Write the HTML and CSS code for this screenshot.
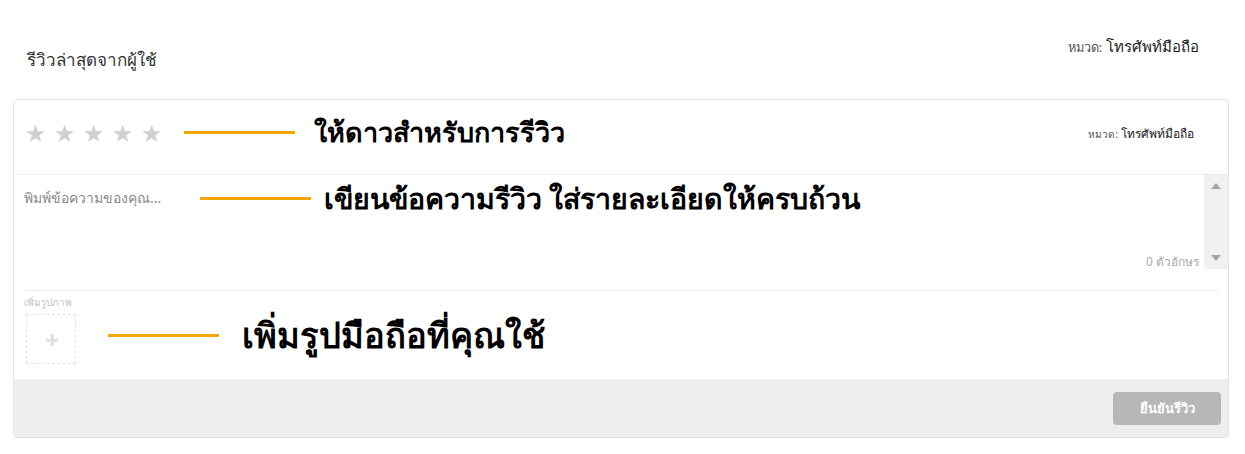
FILE: index.html
```html
<!DOCTYPE html>
<html lang="th">
<head>
<meta charset="utf-8">
<link rel="stylesheet" href="styles.css">
</head>
<body>
<div class="page">
  <header class="head">
    <h2 class="title">รีวิวล่าสุดจากผู้ใช้</h2>
    <div class="cat cat-top"><span class="cat-label">หมวด:</span> <span class="cat-val">โทรศัพท์มือถือ</span></div>
  </header>
  <section class="card">
    <div class="row-stars">
      <div class="stars">
        <span class="star">★</span><span class="star">★</span><span class="star">★</span><span class="star">★</span><span class="star">★</span>
      </div>
      <span class="line l1"></span>
      <span class="note n1">ให้ดาวสำหรับการรีวิว</span>
      <div class="cat cat-in"><span class="cat-label">หมวด:</span> <span class="cat-val">โทรศัพท์มือถือ</span></div>
    </div>
    <div class="row-text">
      <div class="text-main">
        <div class="text-top">
          <span class="placeholder">พิมพ์ข้อความของคุณ...</span>
          <span class="line l2"></span>
          <span class="note n2">เขียนข้อความรีวิว ใส่รายละเอียดให้ครบถ้วน</span>
        </div>
        <div class="count">0 ตัวอักษร</div>
      </div>
      <div class="scroll">
        <span class="arr up"></span>
        <span class="arr down"></span>
      </div>
    </div>
    <div class="row-photo">
      <div class="photo-col">
        <div class="photo-label">เพิ่มรูปภาพ</div>
        <div class="photo-box"><span class="plus"></span></div>
      </div>
      <span class="line l3"></span>
      <span class="note n3">เพิ่มรูปมือถือที่คุณใช้</span>
    </div>
    <footer class="foot">
      <button class="submit">ยืนยันรีวิว</button>
    </footer>
  </section>
</div>
</body>
</html>
```
FILE: styles.css
```css
* { box-sizing: border-box; }
html, body { margin: 0; padding: 0; background: #fff; }
body { font-family: "Noto Sans", "DejaVu Sans", sans-serif; color: #333; }
.page { width: 1245px; height: 454px; padding: 0 16px 0 13px; }
.head { display: flex; justify-content: space-between; align-items: flex-start; height: 99px; }
.title { margin: 46px 0 0 14px; font-size: 17px; font-weight: 400; color: #333; }
.cat { white-space: nowrap; }
.cat-top { margin: 35px 30px 0 0; font-size: 15px; }
.cat-label { color: #555; font-size: 0.85em; }
.cat-val { color: #222; }
.card { border: 1px solid #e3e3e3; border-radius: 4px; height: 339px; display: flex; flex-direction: column; overflow: hidden; }
.row-stars { display: flex; align-items: center; height: 75px; padding: 0 34px 9px 10px; border-bottom: 1px solid #ececec; }
.stars { display: flex; gap: 6px; }
.star { color: #d0d0d0; font-size: 24px; line-height: 1; width: 23px; text-align: center; }
.line { display: block; height: 3px; background: #f5a500; width: 111px; flex: none; }
.l1 { margin-left: 21px; }
.note { font-weight: 700; color: #000; font-size: 27px; white-space: nowrap; line-height: 1.2; }
.n1 { margin-left: 19px; }
.cat-in { margin-left: auto; font-size: 12px; margin-top: 2px; }
.row-text { display: flex; height: 115px; }
.text-main { flex: 1; display: flex; flex-direction: column; padding: 6px 5px 19px 10px; }
.text-top { display: flex; align-items: center; }
.placeholder { color: #888; font-size: 14px; width: 147px; white-space: nowrap; }
.l2 { margin-left: 29px; }
.n2 { margin-left: 13px; font-size: 28.5px; }
.count { margin-top: auto; align-self: flex-end; color: #aaa; font-size: 12px; }
.scroll { width: 24px; background: #f0f0f0; display: flex; flex-direction: column; justify-content: space-between; align-items: center; padding: 8px 0 8px; height: 94px; }
.arr { width: 0; height: 0; border-left: 5px solid transparent; border-right: 5px solid transparent; }
.up { border-bottom: 6px solid #a5a5a5; }
.down { border-top: 6px solid #a5a5a5; }
.row-photo { display: flex; align-items: center; height: 89px; margin: 0 10px; border-top: 1px solid #ececec; }
.photo-col { display: flex; flex-direction: column; gap: 4px; align-self: flex-start; padding-top: 4px; }
.photo-label { font-size: 10px; color: #c4c4c4; }
.photo-box { width: 50px; height: 50px; margin-left: 2px; border: 1px dashed #e2e2e2; position: relative; }
.plus { position: absolute; left: 19px; top: 19px; width: 12px; height: 12px; background:
  linear-gradient(#e0e0e0, #e0e0e0) center/12px 3px no-repeat,
  linear-gradient(#e0e0e0, #e0e0e0) center/3px 12px no-repeat; }
.l3 { margin-left: 32px; }
.n3 { margin-left: 23px; font-size: 34.5px; }
.foot { flex: 1; background: #eeeeee; display: flex; justify-content: flex-end; align-items: center; padding-right: 7px; }
.submit { font-family: inherit; background: #b7b7b7; color: #fff; border: 0; border-radius: 4px; width: 108px; height: 33px; font-weight: 700; font-size: 13px; }
```
